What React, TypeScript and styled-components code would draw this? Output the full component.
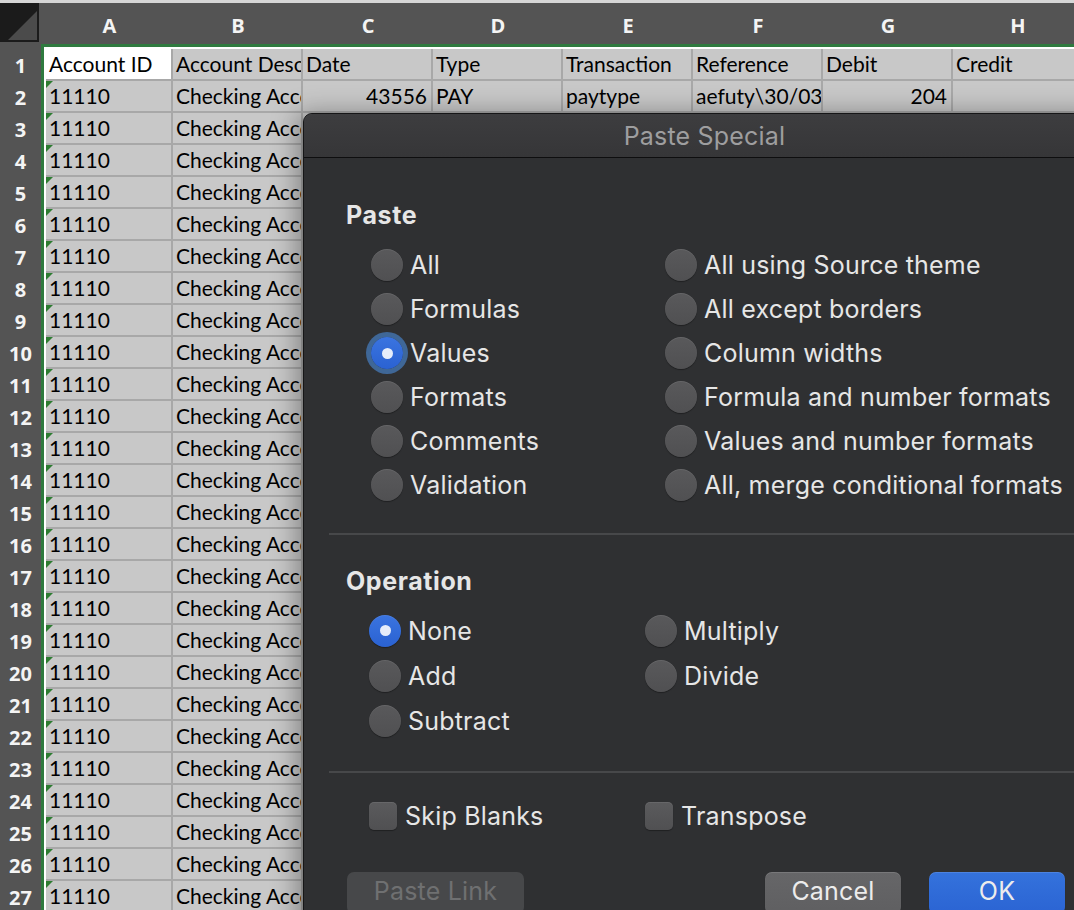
import React from 'react';
import styled, { createGlobalStyle } from 'styled-components';

const GlobalStyle = createGlobalStyle`
  html, body {
    margin: 0;
    padding: 0;
  }
  body {
    background: #c8c8c8;
    overflow: hidden;
    font-family: Lato, "Liberation Sans", sans-serif;
  }
`;

type Column = { letter: string; width: number };

const COLUMNS: Column[] = [
  { letter: 'A', width: 127 },
  { letter: 'B', width: 130 },
  { letter: 'C', width: 130 },
  { letter: 'D', width: 130 },
  { letter: 'E', width: 130 },
  { letter: 'F', width: 130 },
  { letter: 'G', width: 130 },
  { letter: 'H', width: 130 },
];

const HEADER_ROW = ['Account ID', 'Account Description', 'Date', 'Type', 'Transaction', 'Reference', 'Debit', 'Credit'];
const DATA_ROW = ['11110', 'Checking Account', '43556', 'PAY', 'paytype', 'aefuty\\30/03/2019', '204', ''];
const NUMERIC = [2, 6];

const PASTE_LEFT = ['All', 'Formulas', 'Values', 'Formats', 'Comments', 'Validation'];
const PASTE_RIGHT = [
  'All using Source theme',
  'All except borders',
  'Column widths',
  'Formula and number formats',
  'Values and number formats',
  'All, merge conditional formats',
];

const Page = styled.div`
  position: relative;
  width: 1074px;
  height: 910px;
  overflow: hidden;
`;

/* ---------- spreadsheet ---------- */

const Sheet = styled.div`
  display: flex;
  flex-direction: column;
  border-top: 3px solid #d6d6d6;
`;

const HeaderBar = styled.div`
  display: flex;
  height: 41px;
  background: #545454;
`;

const Corner = styled.div`
  width: 39px;
  height: 39px;
  margin: 0 2px 2px 0;
  background: #1b1b1b;
  flex: none;
`;

const CornerTriangle = styled.svg`
  display: block;
`;

const ColumnHead = styled.div<{ $width: number }>`
  width: ${({ $width }) => $width}px;
  flex: none;
  display: flex;
  align-items: center;
  justify-content: center;
  padding-top: 3px;
  color: #f4f4f4;
  font-family: "Open Sans", Lato, sans-serif;
  font-weight: 700;
  font-size: 20px;
`;

const HeadGap = styled.div`
  width: 5px;
  flex: none;
`;

const EdgeBar = styled.div`
  display: flex;
  height: 5px;
`;

const RowNumSpacer = styled.div`
  width: 41px;
  flex: none;
  background: #545454;
`;

const EdgeLine = styled.div`
  flex: 1;
  border-top: 3px solid #2f7a3f;
  border-left: 3px solid #2f7a3f;
  background: #ffffff;
`;

const Row = styled.div`
  display: flex;
  height: 32px;
`;

const RowNum = styled.div`
  width: 41px;
  flex: none;
  background: #545454;
  color: #f4f4f4;
  font-family: "Open Sans", Lato, sans-serif;
  font-weight: 700;
  font-size: 20px;
  display: flex;
  align-items: center;
  justify-content: center;
`;

const RowEdge = styled.div`
  width: 2px;
  flex: none;
  border-left: 3px solid #2f7a3f;
  background: #ffffff;
`;

const Cell = styled.div<{ $width: number; $active?: boolean; $right?: boolean; $flag?: boolean }>`
  position: relative;
  box-sizing: border-box;
  width: ${({ $width }) => $width}px;
  flex: none;
  height: 32px;
  padding: 0 4px 0 3px;
  border-right: 2px solid #a8a8a8;
  border-bottom: 2px solid #a8a8a8;
  background: ${({ $active }) => ($active ? '#ffffff' : '#c8c8c8')};
  color: #000000;
  font-size: 21px;
  line-height: 30px;
  white-space: nowrap;
  overflow: hidden;
  text-align: ${({ $right }) => ($right ? 'right' : 'left')};

  &::before {
    content: '';
    display: ${({ $flag }) => ($flag ? 'block' : 'none')};
    position: absolute;
    left: 0;
    top: 0;
    border-top: 7px solid #2e7d32;
    border-right: 7px solid transparent;
  }
`;

/* ---------- dialog ---------- */

const Dialog = styled.div`
  position: absolute;
  left: 303px;
  top: 113px;
  width: 803px;
  height: 840px;
  box-sizing: border-box;
  border: 1px solid #161617;
  border-radius: 9px 9px 0 0;
  background: #2f3032;
  box-shadow: -6px 0 26px rgba(0, 0, 0, 0.35), inset 0 1px 0 rgba(255, 255, 255, 0.18);
  font-family: Inter, "Liberation Sans", sans-serif;
  color: #e6e6e6;
  overflow: hidden;
`;

const TitleBar = styled.div`
  height: 43px;
  display: flex;
  align-items: center;
  justify-content: center;
  background: linear-gradient(#3d3d3f, #363638);
  border-bottom: 1px solid #0e0e0f;
  border-radius: 8px 8px 0 0;
  color: #9e9e9f;
  font-size: 25px;
  letter-spacing: 0.2px;
`;

const Body = styled.div`
  padding: 43px 0 0 25px;
  display: flex;
  flex-direction: column;
`;

const Section = styled.div`
  padding-left: 17px;
  display: flex;
  flex-direction: column;
`;

const SectionTitle = styled.div<{ $top?: number }>`
  margin-top: ${({ $top }) => $top ?? 0}px;
  font-size: 25px;
  font-weight: 700;
  letter-spacing: 0.6px;
  line-height: 28px;
  height: 28px;
`;

const OptionGrid = styled.div<{ $col: number; $row: number; $indent: number; $top: number }>`
  display: grid;
  grid-template-columns: ${({ $col }) => $col}px auto;
  grid-auto-rows: ${({ $row }) => $row}px;
  margin: ${({ $top }) => $top}px 0 0 ${({ $indent }) => $indent}px;
`;

const Pair = styled.div`
  display: contents;
`;

const Option = styled.div`
  display: flex;
  align-items: center;
  gap: 7px;
  font-size: 25px;
  letter-spacing: 0.2px;
  white-space: nowrap;
`;

const Radio = styled.span<{ $checked?: boolean; $focused?: boolean }>`
  position: relative;
  width: 32px;
  height: 32px;
  flex: none;
  border-radius: 50%;
  box-sizing: border-box;
  background: ${({ $checked }) =>
    $checked ? 'linear-gradient(#3a74e0, #2a62d2)' : 'linear-gradient(#59595b, #505052)'};
  box-shadow: ${({ $focused }) =>
    $focused
      ? '0 0 0 5px rgba(70, 122, 186, 0.75)'
      : 'inset 0 1px 0 rgba(255,255,255,0.08), 0 1px 1px rgba(0,0,0,0.35)'};

  &::after {
    content: '';
    display: ${({ $checked }) => ($checked ? 'block' : 'none')};
    position: absolute;
    left: 50%;
    top: 50%;
    width: 11px;
    height: 11px;
    margin: -5.5px 0 0 -5.5px;
    border-radius: 50%;
    background: #e6edfa;
  }
`;

const Divider = styled.div<{ $top: number }>`
  height: 2px;
  margin-top: ${({ $top }) => $top}px;
  background: #47484a;
`;

const CheckRow = styled.div`
  display: grid;
  grid-template-columns: 276px auto;
  height: 44px;
  margin: 21px 0 0 40px;
`;

const Checkbox = styled.span`
  width: 28px;
  height: 28px;
  flex: none;
  border-radius: 5px;
  background: linear-gradient(#5b5b5d, #505052);
  box-shadow: inset 0 1px 0 rgba(255,255,255,0.08), 0 1px 1px rgba(0,0,0,0.35);
`;

const CheckOption = styled(Option)`
  gap: 8px;
`;

const Footer = styled.div`
  display: flex;
  justify-content: space-between;
  margin: 34px 40px 0 18px;
`;

const ButtonGroup = styled.div`
  display: flex;
  gap: 28px;
`;

const Button = styled.div<{ $variant: 'disabled' | 'default' | 'primary'; $width: number }>`
  width: ${({ $width }) => $width}px;
  height: 42px;
  border-radius: 7px;
  display: flex;
  align-items: center;
  justify-content: center;
  padding-bottom: 4px;
  box-sizing: border-box;
  font-size: 25px;
  letter-spacing: 0.2px;
  color: ${({ $variant }) => ($variant === 'disabled' ? '#6f7071' : '#ececec')};
  background: ${({ $variant }) =>
    $variant === 'primary'
      ? 'linear-gradient(#3472dc, #2b64d3)'
      : $variant === 'default'
      ? 'linear-gradient(#666668, #5f5f61)'
      : '#47484a'};
  box-shadow: ${({ $variant }) =>
    $variant === 'disabled' ? 'none' : 'inset 0 1px 0 rgba(255,255,255,0.12), 0 1px 1px rgba(0,0,0,0.3)'};
`;

/* ---------- app ---------- */

export default function App() {
  const rows = Array.from({ length: 27 }, (_, i) => (i === 0 ? HEADER_ROW : DATA_ROW));

  return (
    <Page>
      <GlobalStyle />
      <Sheet>
        <HeaderBar>
          <Corner>
            <CornerTriangle width="39" height="39" viewBox="0 0 39 39">
              <polygon points="8,37 37,8 37,37" fill="#4b4b4b" />
            </CornerTriangle>
          </Corner>
          <HeadGap />
          {COLUMNS.map((c) => (
            <ColumnHead key={c.letter} $width={c.width}>
              {c.letter}
            </ColumnHead>
          ))}
        </HeaderBar>
        <EdgeBar>
          <RowNumSpacer />
          <EdgeLine />
        </EdgeBar>
        {rows.map((values, r) => (
          <Row key={r}>
            <RowNum>{r + 1}</RowNum>
            <RowEdge />
            {COLUMNS.map((c, ci) => (
              <Cell
                key={c.letter}
                $width={c.width}
                $active={r === 0 && ci === 0}
                $right={r > 0 && NUMERIC.includes(ci)}
                $flag={r > 0 && ci === 0}
              >
                {values[ci]}
              </Cell>
            ))}
          </Row>
        ))}
      </Sheet>

      <Dialog>
        <TitleBar>Paste Special</TitleBar>
        <Body>
          <Section>
            <SectionTitle>Paste</SectionTitle>
            <OptionGrid $col={294} $row={44} $indent={25} $top={14}>
              {PASTE_LEFT.map((label, i) => (
                <Pair key={label}>
                  <Option>
                    <Radio $checked={label === 'Values'} $focused={label === 'Values'} />
                    {label}
                  </Option>
                  <Option>
                    <Radio />
                    {PASTE_RIGHT[i]}
                  </Option>
                </Pair>
              ))}
            </OptionGrid>
          </Section>

          <Divider $top={26} />

          <Section>
            <SectionTitle $top={32}>Operation</SectionTitle>
            <OptionGrid $col={276} $row={45} $indent={23} $top={13}>
              <Option>
                <Radio $checked />
                None
              </Option>
              <Option>
                <Radio />
                Multiply
              </Option>
              <Option>
                <Radio />
                Add
              </Option>
              <Option>
                <Radio />
                Divide
              </Option>
              <Option>
                <Radio />
                Subtract
              </Option>
            </OptionGrid>
          </Section>

          <Divider $top={28} />

          <CheckRow>
            <CheckOption>
              <Checkbox />
              Skip Blanks
            </CheckOption>
            <CheckOption>
              <Checkbox />
              Transpose
            </CheckOption>
          </CheckRow>

          <Footer>
            <Button $variant="disabled" $width={177}>
              Paste Link
            </Button>
            <ButtonGroup>
              <Button $variant="default" $width={136}>
                Cancel
              </Button>
              <Button $variant="primary" $width={136}>
                OK
              </Button>
            </ButtonGroup>
          </Footer>
        </Body>
      </Dialog>
    </Page>
  );
}
